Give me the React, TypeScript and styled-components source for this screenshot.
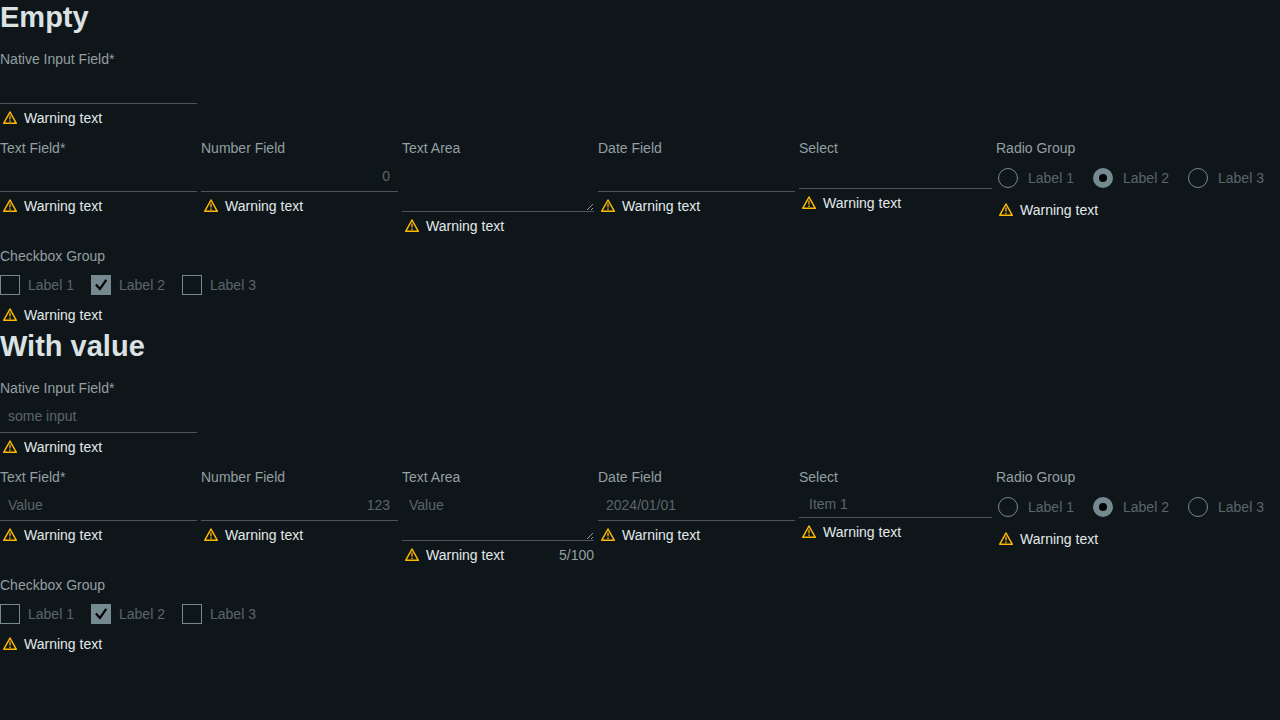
import React, { useId } from "react";
import styled, { createGlobalStyle } from "styled-components";

const color = {
  page: "#0f1619",
  heading: "#dbe2e4",
  label: "#939fa3",
  text: "#e2e9eb",
  disabled: "#5a666a",
  line: "#4b5558",
  control: "#758990",
  mark: "#000000",
  warning: "#ffb900",
};

const GlobalStyle = createGlobalStyle`
  *, *::before, *::after { box-sizing: border-box; }
  :root { color-scheme: dark; }
  body {
    margin: 0;
    background: ${color.page};
    color: ${color.text};
    font: 14px/20px "Liberation Sans", Arial, sans-serif;
  }
`;

const Section = styled.section`
  display: flex;
  flex-direction: column;
  gap: 10px;
  padding-bottom: 4px;
`;

const Heading = styled.h1`
  margin: 0 0 5px;
  color: ${color.heading};
  font-size: 29px;
  line-height: 34px;
  font-weight: 700;
`;

const Row = styled.div`
  display: flex;
  flex-wrap: wrap;
  align-items: flex-start;
  gap: 4px;
`;

const FieldBox = styled.div<{ $width: number }>`
  display: flex;
  flex-direction: column;
  width: ${(p) => p.$width}px;

  > label {
    margin-bottom: 2px;
    color: ${color.label};
    white-space: nowrap;
  }
`;

const Input = styled.input<{ $align?: "left" | "right" }>`
  width: 100%;
  height: 32px;
  margin: 0;
  padding: 0 8px;
  border: 0;
  border-bottom: 1px solid ${color.line};
  border-radius: 0;
  background: transparent;
  color: ${color.disabled};
  font: inherit;
  text-align: ${(p) => p.$align ?? "left"};

  &::placeholder { color: ${color.disabled}; opacity: 1; }
`;

const NativeInput = styled(Input)`
  height: 33px;
  padding-bottom: 1px;
`;

const TextArea = styled.textarea`
  display: block;
  width: 100%;
  height: 52px;
  margin: 0;
  padding: 6px 7px;
  border: 0;
  border-bottom: 1px solid ${color.line};
  border-radius: 0;
  background: transparent;
  color: ${color.disabled};
  font: inherit;
  resize: both;
`;

const SelectInput = styled.select`
  appearance: none;
  width: 100%;
  height: 29px;
  margin: 0;
  padding: 1px 10px 0;
  border: 0;
  border-bottom: 1px solid ${color.line};
  border-radius: 0;
  background: transparent;
  color: ${color.disabled};
  font: inherit;
  opacity: 1;
`;

const Footer = styled.div`
  display: flex;
  justify-content: space-between;
  margin-top: 4px;
`;

const WarningLine = styled.span`
  display: flex;
  align-items: center;
  gap: 6px;
  padding-left: 2px;
  white-space: nowrap;

  svg { flex: none; color: ${color.warning}; }
`;

const Counter = styled.span`
  color: ${color.label};
`;

const Group = styled.fieldset`
  min-width: 0;
  margin: 0;
  padding: 0;
  border: 0;
`;

const Legend = styled.legend`
  padding: 0;
  color: ${color.label};
`;

const Options = styled.div<{ $top: number; $bottom: number }>`
  display: flex;
  gap: 16px;
  padding: ${(p) => p.$top}px 0 ${(p) => p.$bottom}px;
`;

const Option = styled.label`
  display: flex;
  align-items: center;
  gap: 8px;
  color: ${color.disabled};
  white-space: nowrap;
`;

const OptionText = styled.span`
  min-width: 47px;
`;

const Radio = styled.input`
  appearance: none;
  width: 20px;
  height: 20px;
  margin: 2px;
  border: 1px solid ${color.control};
  border-radius: 50%;

  &:checked {
    border-width: 6px;
    background: ${color.mark};
  }
`;

const CheckStack = styled.span`
  display: grid;

  > * { grid-area: 1 / 1; }
  svg { pointer-events: none; color: ${color.mark}; }
`;

const Check = styled.input`
  appearance: none;
  width: 20px;
  height: 20px;
  margin: 0;
  border: 1px solid ${color.control};

  &:checked { background: ${color.control}; }
`;

function Warning() {
  return (
    <WarningLine>
      <svg width="16" height="16" viewBox="0 0 16 16" fill="none" stroke="currentColor" aria-hidden="true">
        <path d="M8 2 L14.3 13.3 H1.7 Z" strokeWidth="1.5" strokeLinejoin="round" />
        <path d="M8 5.6 V9.6 M8 10.6 V12" strokeWidth="1.3" />
      </svg>
      Warning text
    </WarningLine>
  );
}

type FieldProps = {
  label: string;
  width: number;
  counter?: string;
  children: (id: string) => React.ReactNode;
};

function Field({ label, width, counter, children }: FieldProps) {
  const id = useId();
  return (
    <FieldBox $width={width}>
      <label htmlFor={id}>{label}</label>
      {children(id)}
      <Footer>
        <Warning />
        {counter && <Counter>{counter}</Counter>}
      </Footer>
    </FieldBox>
  );
}

const options = ["Label 1", "Label 2", "Label 3"];

function RadioGroup() {
  const name = useId();
  return (
    <Group>
      <Legend>Radio Group</Legend>
      <Options $top={8} $bottom={10}>
        {options.map((option, i) => (
          <Option key={option}>
            <Radio type="radio" name={name} defaultChecked={i === 1} disabled />
            <OptionText>{option}</OptionText>
          </Option>
        ))}
      </Options>
      <Warning />
    </Group>
  );
}

function CheckboxGroup() {
  return (
    <Group>
      <Legend>Checkbox Group</Legend>
      <Options $top={9} $bottom={10}>
        {options.map((option, i) => (
          <Option key={option}>
            <CheckStack>
              <Check type="checkbox" defaultChecked={i === 1} disabled />
              {i === 1 && (
                <svg width="20" height="20" viewBox="0 0 20 20" fill="none" stroke="currentColor" aria-hidden="true">
                  <path d="M4.9 9.5 L8.9 13.9 L15.3 4.9" strokeWidth="2.2" />
                </svg>
              )}
            </CheckStack>
            <OptionText>{option}</OptionText>
          </Option>
        ))}
      </Options>
      <Warning />
    </Group>
  );
}

type Values = {
  native: string;
  text: string;
  number: string;
  area: string;
  date: string;
  select: string;
  counter?: string;
};

function Fields({ title, values }: { title: string; values: Values }) {
  return (
    <Section>
      <Heading>{title}</Heading>
      <Field label="Native Input Field*" width={197}>
        {(id) => <NativeInput id={id} type="text" defaultValue={values.native} disabled />}
      </Field>
      <Row>
        <Field label="Text Field*" width={197}>
          {(id) => <Input id={id} type="text" defaultValue={values.text} disabled />}
        </Field>
        <Field label="Number Field" width={197}>
          {(id) => (
            <Input id={id} inputMode="numeric" $align="right" placeholder="0" defaultValue={values.number} disabled />
          )}
        </Field>
        <Field label="Text Area" width={192} counter={values.counter}>
          {(id) => <TextArea id={id} defaultValue={values.area} disabled />}
        </Field>
        <Field label="Date Field" width={197}>
          {(id) => <Input id={id} type="text" defaultValue={values.date} disabled />}
        </Field>
        <Field label="Select" width={193}>
          {(id) => (
            <SelectInput id={id} defaultValue={values.select} disabled>
              <option value="" />
              <option>Item 1</option>
            </SelectInput>
          )}
        </Field>
        <RadioGroup />
      </Row>
      <CheckboxGroup />
    </Section>
  );
}

const empty: Values = { native: "", text: "", number: "", area: "", date: "", select: "" };

const filled: Values = {
  native: "some input",
  text: "Value",
  number: "123",
  area: "Value",
  date: "2024/01/01",
  select: "Item 1",
  counter: "5/100",
};

export default function App() {
  return (
    <main>
      <GlobalStyle />
      <Fields title="Empty" values={empty} />
      <Fields title="With value" values={filled} />
    </main>
  );
}
